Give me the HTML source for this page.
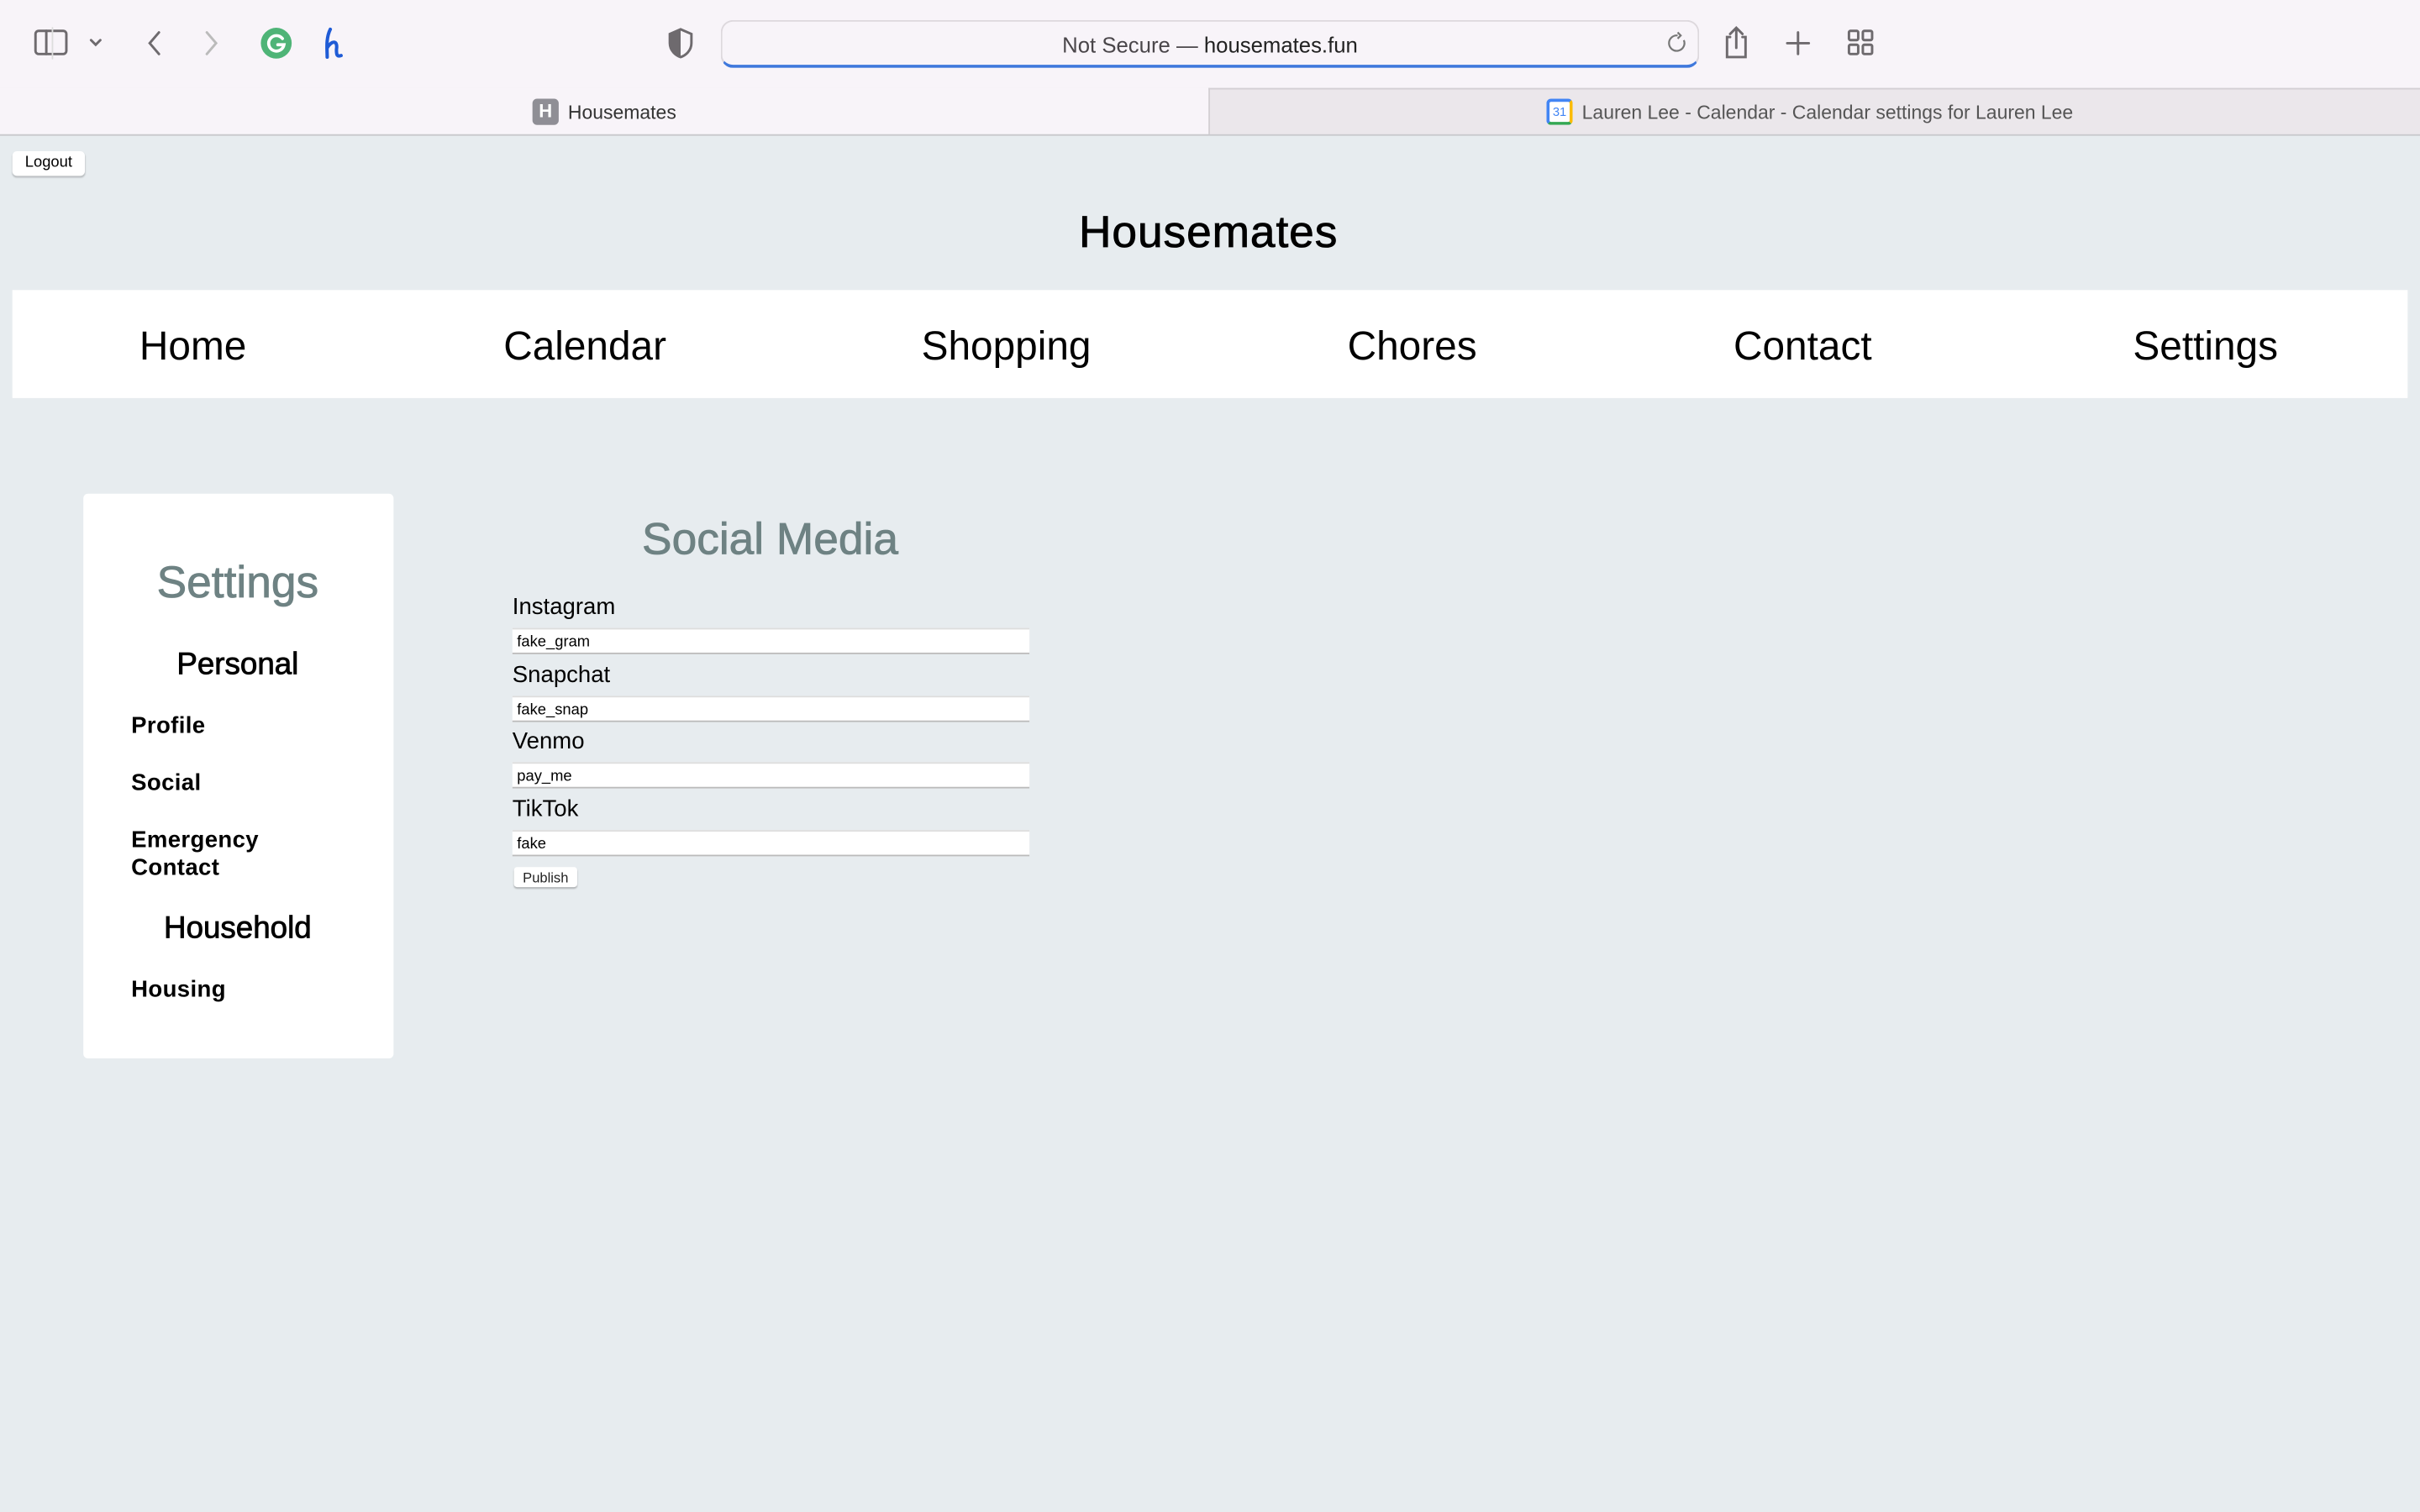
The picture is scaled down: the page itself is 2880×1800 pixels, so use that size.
<!DOCTYPE html>
<html><head><meta charset="utf-8"><style>
*{margin:0;padding:0;box-sizing:border-box}
html,body{width:2880px;height:1800px;overflow:hidden;background:#e7ecef}
#w{position:absolute;left:0;top:0;width:1568px;height:980px;transform:scale(1.836735);transform-origin:0 0;font-family:"Liberation Sans",sans-serif;background:#e7ecef}
.a{position:absolute;white-space:nowrap}
.c{transform:translateX(-50%)}
.m{-webkit-text-stroke:0.45px currentColor}
.nav{font-size:26px;color:#000;top:209px}
.lbl{font-size:15px;color:#000;left:332px}
.inp{position:absolute;left:332px;width:335px;height:17px;background:#fff;border-top:1px solid #ddd;border-bottom:1.5px solid #bbb;font-size:10px;padding-left:3px;line-height:17px}
.side{font-size:15px;font-weight:bold;left:85px;color:#000;letter-spacing:.2px}
</style></head><body><div id="w">
<div class="a" style="left:0;top:0;width:1568px;height:57px;background:#f8f4f9"></div>
<div class="a" style="left:0;top:57px;width:783px;height:30px;background:#f8f4f9"></div>
<div class="a" style="left:783px;top:57px;width:785px;height:30px;background:#ebe7eb;border-left:1px solid #d4d0d4;border-top:1px solid #d4d0d4"></div>
<div class="a" style="left:0;top:87px;width:1568px;height:1px;background:#c8c8cc"></div>
<svg class="a" style="left:20px;top:16px" width="230" height="24" viewBox="0 0 230 24" fill="none" stroke="#6e6a6e" stroke-width="1.6" stroke-linecap="round">
<rect x="3" y="4" width="20" height="15" rx="2"/><line x1="10" y1="4" x2="10" y2="19"/>
<line x1="14" y1="2" x2="14" y2="22" stroke="#ddd" stroke-width="1"/>
<path d="M39 10l3 3 3-3"/>
<path d="M83 5l-6 7 6 7"/><path d="M114 5l6 7-6 7" stroke="#bbb"/>
<circle cx="159" cy="12" r="10" fill="#4fb477" stroke="none"/><path d="M163 9a5 5 0 1 0 1 4h-4" stroke="#fff" stroke-width="2"/>
<path d="M194 3c-3 6-2 13-2 18M192 15c3-5 7-5 6 1 0 3 0 5 3 4" stroke="#1f5bd6" stroke-width="2.2"/>
</svg>
<svg class="a" style="left:432px;top:18px" width="18" height="20"><path d="M9 1L2 4v6c0 5 4 8 7 9 3-1 7-4 7-9V4z" fill="none" stroke="#6e6a6e" stroke-width="1.6"/><path d="M9 1L2 4v6c0 5 4 8 7 9z" fill="#6e6a6e"/></svg>
<div class="a" style="left:467px;top:13px;width:634px;height:31px;border:1px solid #ddd8dd;border-radius:8px;background:#f8f4f9;border-bottom:2.5px solid #3f78dc"></div>
<div class="a c" style="left:784px;top:21px;font-size:14px;color:#4a464a">Not Secure — <span style="color:#222">housemates.fun</span></div>
<svg class="a" style="left:1079px;top:19px" width="16" height="18"><path d="M12 7a5 5 0 1 1-4-3M8 2l2 2-2 2" fill="none" stroke="#777" stroke-width="1.2"/></svg>
<svg class="a" style="left:1112px;top:14px" width="110" height="28" fill="none" stroke="#6e6a6e" stroke-width="1.6" stroke-linecap="round">
<path d="M9 10H7v13h12V10h-2M13 4v13M9 8l4-4 4 4"/><path d="M53 7v14M46 14h14"/>
<rect x="86" y="6" width="6" height="6" rx="1"/><rect x="95" y="6" width="6" height="6" rx="1"/><rect x="86" y="15" width="6" height="6" rx="1"/><rect x="95" y="15" width="6" height="6" rx="1"/>
</svg>
<div class="a" style="left:345px;top:64px;width:17px;height:17px;border-radius:3px;background:#8f8e95;color:#fff;font-size:12px;font-weight:bold;text-align:center;line-height:17px">H</div>
<div class="a" style="left:368px;top:66px;font-size:12.5px;color:#333">Housemates</div>
<div class="a" style="left:1002px;top:64px;width:17px;height:17px;border-radius:3px;background:#fff;border:2px solid #4285f4;border-bottom-color:#34a853;border-right-color:#fbbc04;font-size:8px;color:#4285f4;text-align:center;line-height:13px">31</div>
<div class="a" style="left:1025px;top:66px;font-size:12.5px;color:#555">Lauren Lee - Calendar - Calendar settings for Lauren Lee</div>

<div class="a" style="left:8px;top:98px;width:47px;height:16px;background:#fff;border-radius:3px;box-shadow:0 1px 1px rgba(0,0,0,.2);font-size:10px;text-align:center;line-height:16px">Logout</div>
<div class="a c m" style="left:783px;top:135px;font-size:29px;letter-spacing:.5px">Housemates</div>
<div class="a" style="left:8px;top:188px;width:1552px;height:70px;background:#fff"></div>
<div class="a c nav" style="left:125px">Home</div>
<div class="a c nav" style="left:379px">Calendar</div>
<div class="a c nav" style="left:652px">Shopping</div>
<div class="a c nav" style="left:915px">Chores</div>
<div class="a c nav" style="left:1168px">Contact</div>
<div class="a c nav" style="left:1429px">Settings</div>

<div class="a" style="left:54px;top:320px;width:201px;height:366px;background:#fff;border-radius:3px"></div>
<div class="a c m" style="left:154px;top:362px;font-size:29px;color:#6e8283">Settings</div>
<div class="a c m" style="left:154px;top:420px;font-size:20px">Personal</div>
<div class="a side" style="top:462px">Profile</div>
<div class="a side" style="top:499px">Social</div>
<div class="a side" style="top:536px;line-height:18px">Emergency<br>Contact</div>
<div class="a c m" style="left:154px;top:591px;font-size:20px">Household</div>
<div class="a side" style="top:633px">Housing</div>

<div class="a c m" style="left:499px;top:334px;font-size:29px;color:#6e8283">Social Media</div>
<div class="a lbl" style="top:385px">Instagram</div><div class="inp" style="top:407px">fake_gram</div>
<div class="a lbl" style="top:429px">Snapchat</div><div class="inp" style="top:451px">fake_snap</div>
<div class="a lbl" style="top:472px">Venmo</div><div class="inp" style="top:494px">pay_me</div>
<div class="a lbl" style="top:516px">TikTok</div><div class="inp" style="top:538px">fake</div>
<div class="a" style="left:333px;top:562px;width:41px;height:13px;background:#fff;border-radius:2px;box-shadow:0 1px 1px rgba(0,0,0,.25);font-size:9px;text-align:center;line-height:14px;color:#222">Publish</div>
</div></body></html>
